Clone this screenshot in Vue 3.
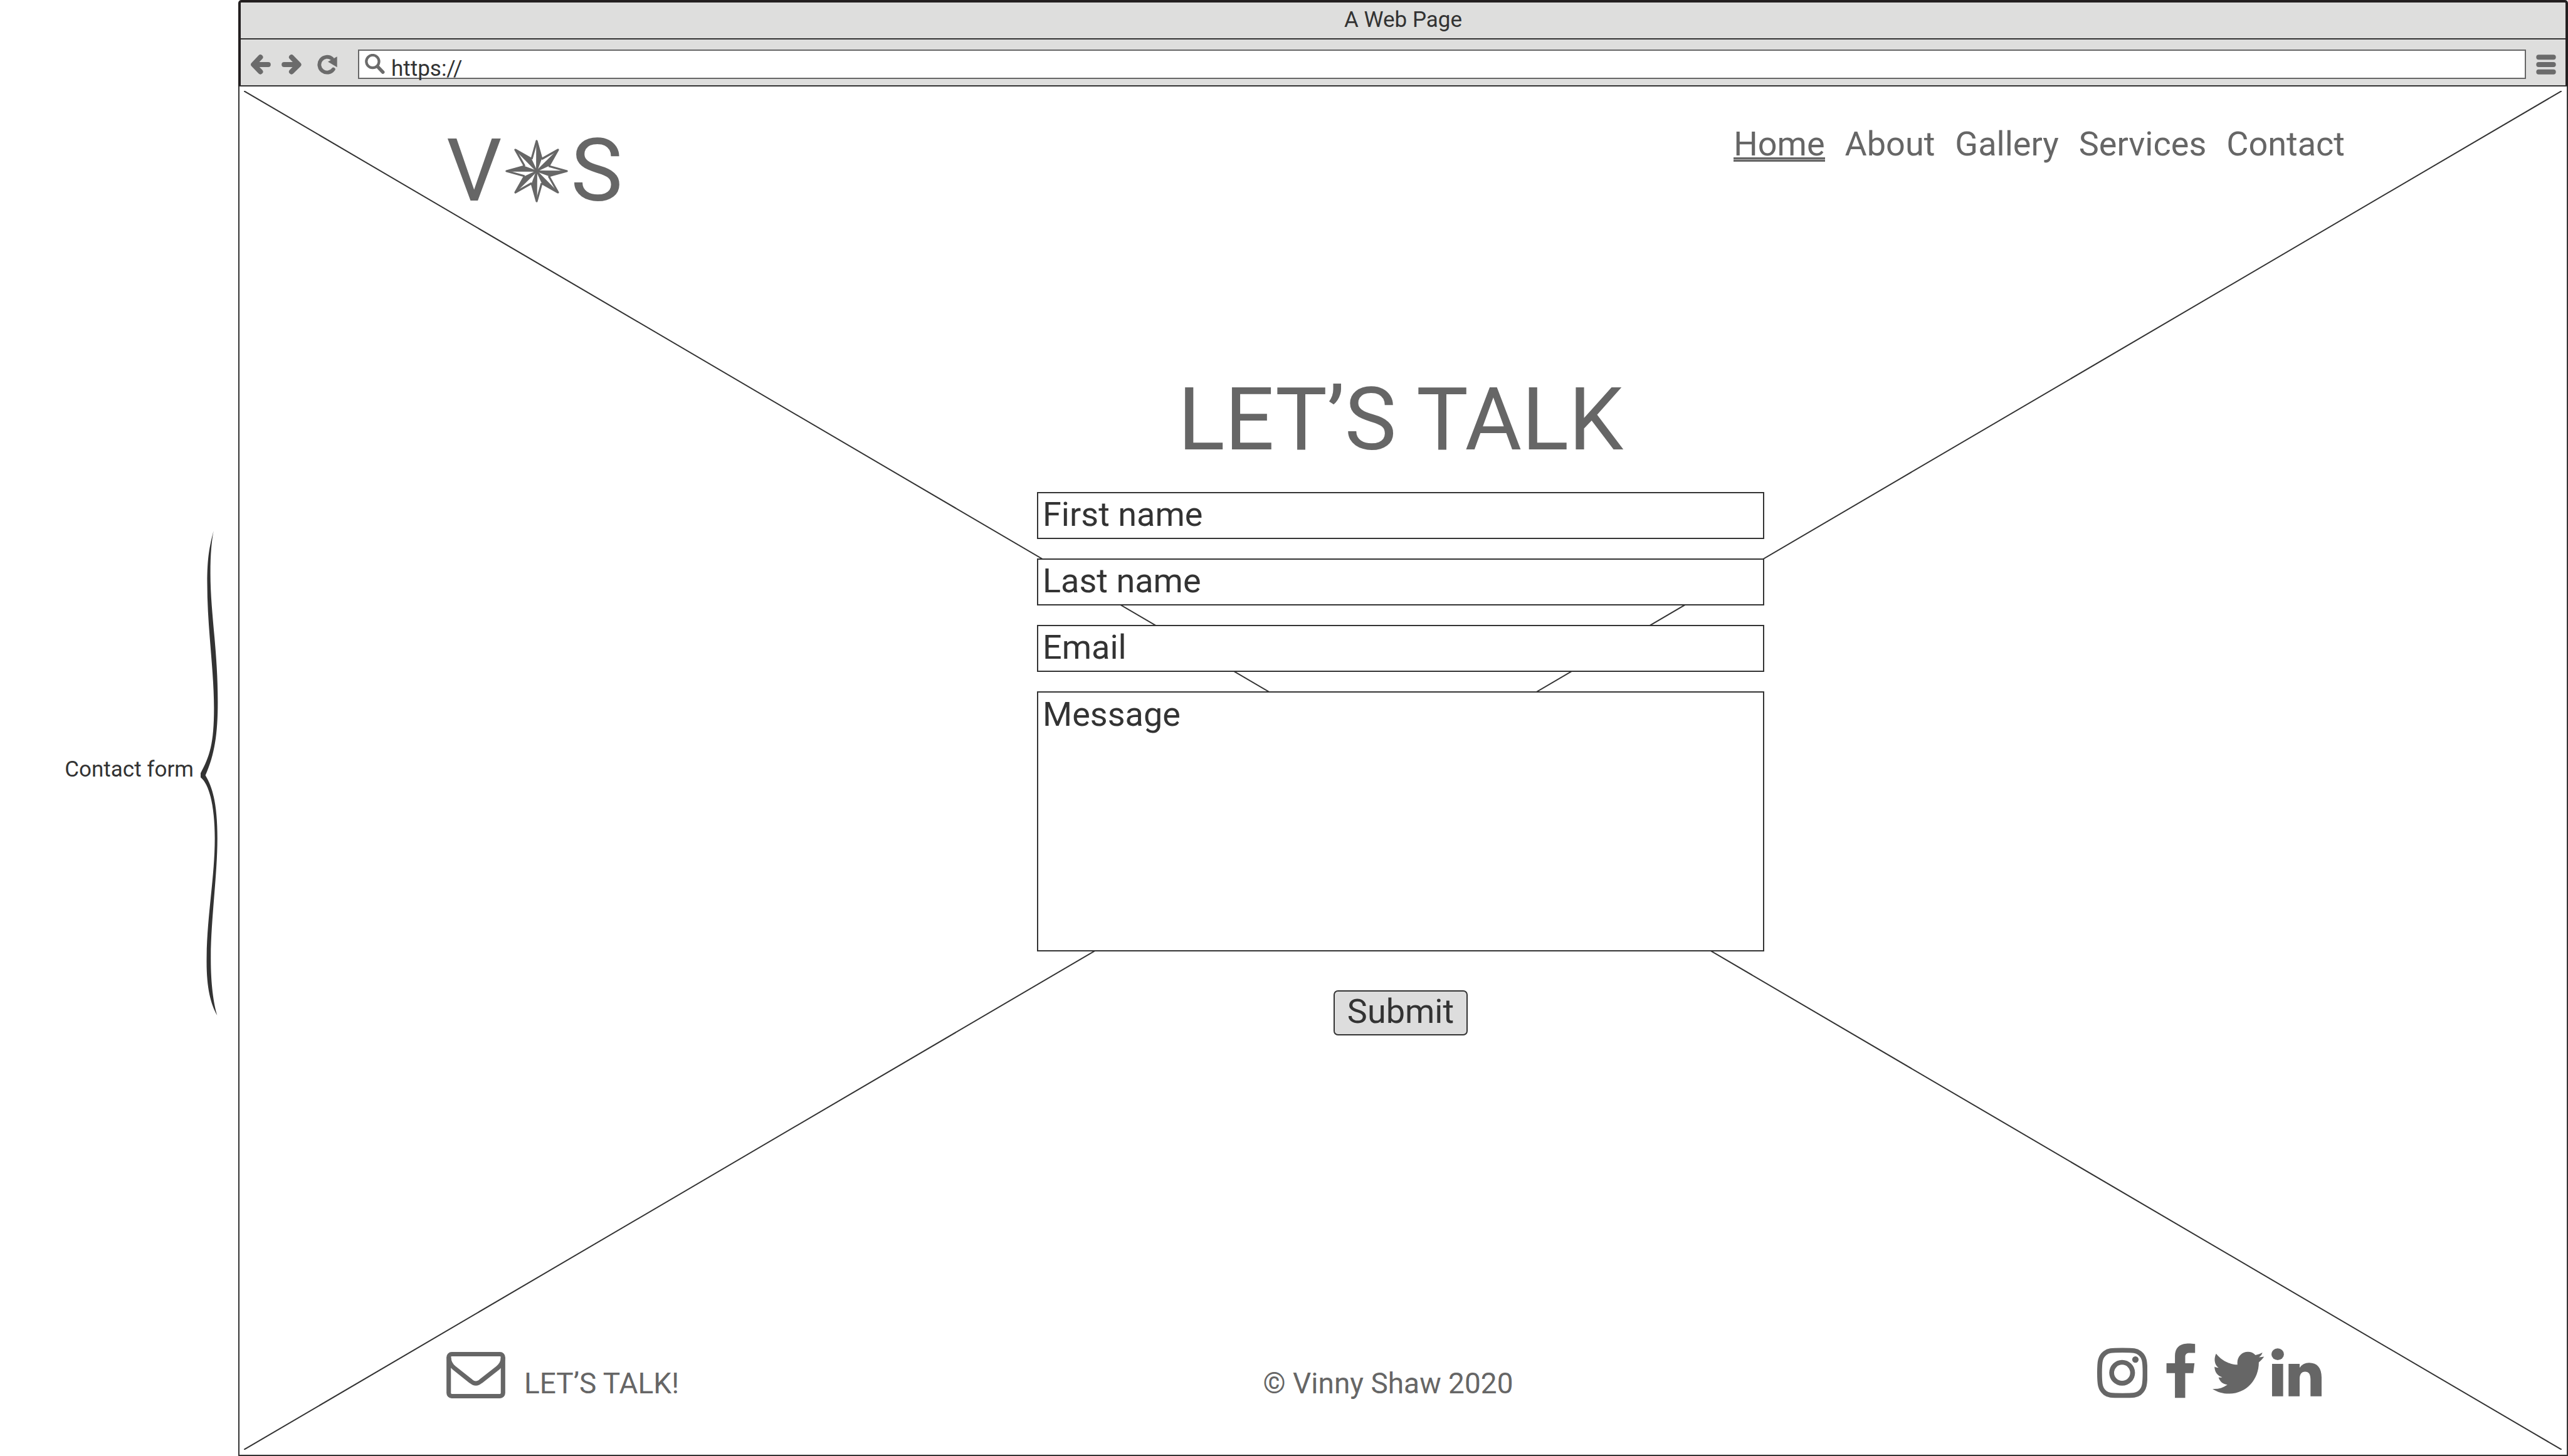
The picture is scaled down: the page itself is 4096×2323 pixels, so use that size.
<script setup>
import { ref } from 'vue'

const links = ['Home', 'About', 'Gallery', 'Services', 'Contact']
const current = ref('Home')
const address = ref('https://')
const fields = [
  { id: 'first-name', label: 'First name', type: 'text' },
  { id: 'last-name', label: 'Last name', type: 'text' },
  { id: 'email', label: 'Email', type: 'email' },
]
const rays = [0, 45, 90, 135, 180, 225, 270, 315]
</script>

<template>
  <div class="board">
    <aside class="note">
      <p class="note-text">Contact form</p>
      <svg class="brace" viewBox="720 28 88 1508" preserveAspectRatio="none" aria-hidden="true">
        <path d="M785 28C765 75 753 110 753 190C753 330 787 460 787 580C787 690 765 730 720 782V795C770 820 791 900 791 985C791 1110 750 1230 750 1370C750 1450 770 1500 803 1536C785 1500 771 1440 771 1360C771 1240 804 1100 804 985C804 890 785 830 744 789C790 725 806 660 806 560C806 400 769 280 769 160C769 100 775 60 785 28Z" />
      </svg>
    </aside>

    <div class="browser">
      <div class="chrome">
        <div class="titlebar">A Web Page</div>
        <div class="toolbar">
          <div class="history">
            <button type="button" class="tool" aria-label="Back">
              <svg viewBox="101 269 98 98"><path class="arrow" d="M148 282L114 318L148 353M118 318H186" /></svg>
            </button>
            <button type="button" class="tool" aria-label="Forward">
              <svg viewBox="251 269 98 98"><path class="arrow" d="M300 282L335 318L300 353M331 318H264" /></svg>
            </button>
          </div>
          <button type="button" class="tool reload" aria-label="Reload">
            <svg viewBox="428 269 98 98">
              <path class="loop" d="M500 289A38 38 0 1 0 507 341" />
              <path d="M480 304L525 279V331Z" />
            </svg>
          </button>
          <div class="address">
            <svg viewBox="662 268 98 98" aria-hidden="true">
              <circle class="lens" cx="700" cy="305" r="31" />
              <path class="handle" d="M726 332L750 357" />
            </svg>
            <input v-model="address" type="text" aria-label="Address" />
          </div>
          <button type="button" class="tool" aria-label="Menu">
            <svg viewBox="239 269 98 98">
              <rect x="240" y="270" width="96" height="24" rx="12" />
              <rect x="240" y="306" width="96" height="24" rx="12" />
              <rect x="240" y="342" width="96" height="24" rx="12" />
            </svg>
          </button>
        </div>
      </div>

      <div class="page">
        <svg class="cross" viewBox="0 0 100 100" preserveAspectRatio="none" aria-hidden="true">
          <path d="M0 0L100 100M100 0L0 100" vector-effect="non-scaling-stroke" />
        </svg>

        <header class="header">
          <a class="logo" href="#" aria-label="VS">
            <span>V</span>
            <svg class="star" viewBox="-156 -156 312 312" aria-hidden="true">
              <path
                v-for="angle in rays"
                :key="angle"
                class="ray"
                d="M-25 -60L0 -150L25 -60"
                :transform="`rotate(${angle})`"
              />
              <path
                v-for="angle in rays"
                :key="`half-${angle}`"
                d="M-3 0L-2 -150H0L25 -60L3 0Z"
                :transform="`rotate(${angle})`"
              />
            </svg>
            <span>S</span>
          </a>
          <nav class="nav">
            <a
              v-for="link in links"
              :key="link"
              href="#"
              :class="{ active: link === current }"
              @click.prevent="current = link"
            >{{ link }}</a>
          </nav>
        </header>

        <main class="main">
          <h1>LET’S TALK</h1>
          <form class="form" @submit.prevent>
            <input
              v-for="field in fields"
              :id="field.id"
              :key="field.id"
              class="field"
              :type="field.type"
              :placeholder="field.label"
              :aria-label="field.label"
            />
            <textarea class="field message" placeholder="Message" aria-label="Message"></textarea>
            <button class="submit" type="submit">Submit</button>
          </form>
        </main>

        <footer class="footer">
          <a class="mail" href="#">
            <svg viewBox="107 113 290 229" aria-hidden="true">
              <rect x="118" y="124" width="268" height="207" rx="15" />
              <path d="M119 140C119 165 130 180 145 192L228 258Q252 278 276 258L360 192C375 178 386 165 386 140" />
            </svg>
            <span>LET’S TALK!</span>
          </a>
          <p>© Vinny Shaw 2020</p>
          <div class="social">
            <a href="#" aria-label="Instagram">
              <svg viewBox="107 70 250 274">
                <g fill="none" stroke="#666" stroke-width="24">
                  <path d="M232 105C290 105 302 107 318 119C342 138 345 160 345 217C345 275 342 297 318 317C302 329 290 330 232 330C174 330 162 329 146 317C122 297 119 275 119 217C119 160 122 138 146 119C162 107 174 105 232 105Z" />
                  <circle cx="231" cy="217" r="52" />
                </g>
                <circle cx="297" cy="151" r="16" />
              </svg>
            </a>
            <a href="#" aria-label="Facebook">
              <svg viewBox="391 70 256 274">
                <path d="M594 74C575 71 560 71 550 72C515 74 494 96 494 132V170H452V219H494V342H545V219H585L591 170H545V138C545 124 553 118 568 118H594Z" />
              </svg>
            </a>
            <a href="#" aria-label="Twitter">
              <svg viewBox="681 70 256 274">
                <path d="M699 122C725 155 762 175 805 177C800 140 825 113 857 113C872 113 885 119 894 129C906 127 918 123 929 117C926 127 920 134 912 140C921 140 929 138 937 137C930 148 921 157 911 165C911 250 850 321 762 321C733 321 705 313 681 297C708 299 733 292 755 276C733 275 717 261 711 240C717 241 723 241 729 239C706 233 691 213 691 187C697 190 704 192 711 192C691 178 686 148 699 122Z" />
              </svg>
            </a>
            <a href="#" aria-label="LinkedIn">
              <svg viewBox="971 70 250 274">
                <ellipse cx="1002" cy="125" rx="31" ry="29" />
                <path d="M974 173H1029V334H974ZM1056 173H1111V192C1122 176 1138 167 1158 167C1198 167 1220 192 1220 240V334H1165V250C1165 225 1157 212 1138 212C1120 212 1111 225 1111 248V334H1056Z" />
              </svg>
            </a>
          </div>
        </footer>
      </div>
    </div>
  </div>
</template>

<style>
body {
  margin: 0;
  background: #fff;
}
</style>

<style scoped>
* {
  box-sizing: border-box;
}

.board {
  display: flex;
  min-height: 100vh;
  font-family: Roboto, sans-serif;
  color: #333;
}

.board svg {
  display: block;
}

h1,
p {
  margin: 0;
  font-weight: 400;
}

a {
  color: inherit;
  text-decoration: none;
}

input,
textarea,
button {
  margin: 0;
  font-family: inherit;
  color: inherit;
  outline: none;
}

/* Side note */
.note {
  flex: none;
  width: 380px;
  display: flex;
  align-items: flex-start;
  justify-content: flex-end;
  gap: 11px;
  padding: 847px 32px 0 0;
}

.note-text {
  height: 773px;
  display: flex;
  align-items: center;
  padding-bottom: 12px;
  font-size: 35px;
  line-height: 42px;
  white-space: nowrap;
}

.brace {
  width: 28px;
  height: 773px;
  fill: #333;
}

/* Browser window */
.browser {
  flex: 1;
  min-width: 0;
  display: flex;
  flex-direction: column;
}

.chrome {
  border: 4px solid #231f20;
  border-bottom: 2px solid #333;
  border-radius: 5px 5px 0 0;
  background: #dededd;
}

.titlebar {
  height: 59px;
  border-bottom: 2px solid #333;
  font-size: 35px;
  line-height: 56px;
  text-align: center;
}

.toolbar {
  height: 73px;
  display: flex;
  align-items: flex-start;
  padding: 16px 15px 0 16px;
}

.history {
  display: flex;
  gap: 17px;
  margin-right: 25px;
}

.tool {
  flex: none;
  width: 32px;
  height: 47px;
  display: flex;
  align-items: center;
  padding: 0;
  border: 0;
  background: none;
}

.tool svg {
  width: 32px;
  height: 32px;
  fill: #6b6b6b;
}

.tool .arrow,
.tool .loop {
  fill: none;
  stroke: #6b6b6b;
  stroke-linecap: round;
  stroke-linejoin: round;
  stroke-width: 25px;
}

.tool .loop {
  stroke-width: 18px;
}

.reload {
  margin-right: 33px;
}

.address {
  flex: 1;
  height: 47px;
  display: flex;
  align-items: flex-start;
  gap: 10px;
  margin-right: 16px;
  padding: 5px 9px;
  border: 2px solid #666;
  background: #fff;
}

.address svg {
  flex: none;
  width: 32px;
  height: 32px;
  fill: none;
  stroke: #6b6b6b;
}

.lens {
  stroke-width: 13px;
}

.handle {
  stroke-width: 17px;
  stroke-linecap: round;
}

.address input {
  flex: 1;
  height: 48px;
  padding: 0;
  border: 0;
  background: transparent;
  font-size: 35px;
  line-height: 48px;
}

/* Page */
.page {
  position: relative;
  flex: 1;
  display: flex;
  flex-direction: column;
  border: 2px solid #333;
  border-top: 0;
  color: #666;
}

.cross {
  position: absolute;
  z-index: -1;
  top: 7px;
  left: 7px;
  width: calc(100% - 15px);
  height: calc(100% - 15px);
  fill: none;
  stroke: #333;
  stroke-width: 2px;
}

.header {
  display: flex;
  align-items: flex-start;
  justify-content: space-between;
  padding: 60px 354px 0 330px;
}

.logo {
  display: flex;
  align-items: center;
  gap: 5px;
  padding-top: 25px;
  font-size: 139px;
  line-height: 100px;
}

.star {
  width: 100px;
  height: 100px;
  fill: #666;
}

.ray {
  fill: #fff;
  stroke: #666;
  stroke-width: 10px;
  stroke-linejoin: round;
}

.nav {
  display: flex;
  gap: 32px;
  font-size: 54px;
  line-height: 64px;
}

.active {
  background: linear-gradient(#666 0 3px, #bbb 3px 4px, #666 4px 7px) 0 53px / 100% 7px no-repeat;
}

.main {
  display: flex;
  flex-direction: column;
  align-items: center;
  padding: 277px 8px 0 0;
}

h1 {
  font-size: 139px;
  line-height: 140px;
}

.form {
  width: 1160px;
  display: flex;
  flex-direction: column;
  align-items: center;
  gap: 31px;
  margin-top: 45px;
  color: #333;
}

.field {
  width: 100%;
  height: 75px;
  padding: 0 7px 4px;
  border: 2px solid #333;
  border-radius: 0;
  background: #fff;
  font-size: 54px;
  line-height: 64px;
}

.field::placeholder {
  color: #333;
  opacity: 1;
}

.message {
  display: block;
  height: 415px;
  padding-top: 3px;
  resize: none;
}

.submit {
  height: 72px;
  margin-top: 31px;
  padding: 0 20px 6px;
  border: 2px solid #333;
  border-radius: 7px;
  background: #ddd;
  font-size: 54px;
  line-height: 64px;
}

.footer {
  display: flex;
  align-items: flex-end;
  justify-content: space-between;
  margin-top: auto;
  padding: 100px 391px 90px 330px;
  font-size: 46px;
  line-height: 48px;
}

.mail {
  display: flex;
  align-items: flex-end;
  gap: 30px;
}

.mail svg {
  width: 94px;
  height: 74px;
  fill: none;
  stroke: #666;
  stroke-width: 22px;
}

.social {
  display: flex;
  gap: 11px;
}

.social svg {
  height: 88px;
  fill: #666;
}
</style>
